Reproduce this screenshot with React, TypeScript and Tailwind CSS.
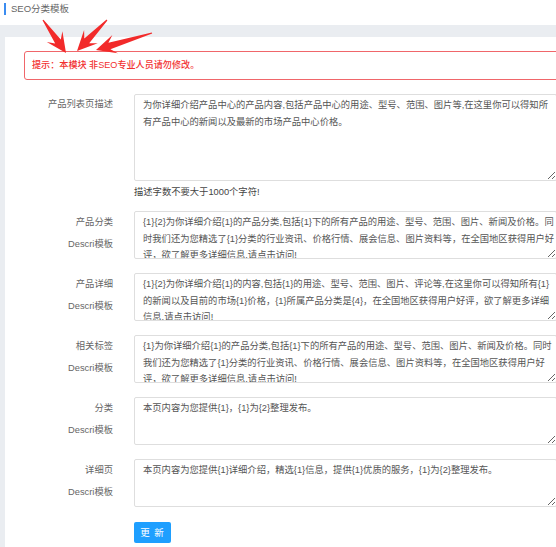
import React from "react";

const FONT = { fontFamily: '"Liberation Sans", Arial, "Noto Sans CJK SC", sans-serif' };

function arrowPoints(tx: number, ty: number, hx: number, hy: number) {
  const dx = hx - tx;
  const dy = hy - ty;
  const len = Math.sqrt(dx * dx + dy * dy);
  const ux = dx / len;
  const uy = dy / len;
  const px = -uy;
  const py = ux;
  const headLen = 20;
  const headW = 9.5;
  const neckW = 3.4;
  const tailW = 0.6;
  const bx = hx - ux * headLen;
  const by = hy - uy * headLen;
  const nx = hx - ux * (headLen - 6);
  const ny = hy - uy * (headLen - 6);
  const pts = [
    [tx + px * tailW, ty + py * tailW],
    [nx + px * neckW, ny + py * neckW],
    [bx + px * headW, by + py * headW],
    [hx, hy],
    [bx - px * headW, by - py * headW],
    [nx - px * neckW, ny - py * neckW],
    [tx - px * tailW, ty - py * tailW],
  ];
  return pts.map((p) => `${p[0].toFixed(1)},${p[1].toFixed(1)}`).join(" ");
}

const rows = [
  {
    label: "产品分类",
    text: "{1}{2}为你详细介绍{1}的产品分类,包括{1}下的所有产品的用途、型号、范围、图片、新闻及价格。同时我们还为您精选了{1}分类的行业资讯、价格行情、展会信息、图片资料等，在全国地区获得用户好评，欲了解更多详细信息,请点击访问!",
  },
  {
    label: "产品详细",
    text: "{1}{2}为你详细介绍{1}的内容,包括{1}的用途、型号、范围、图片、评论等,在这里你可以得知所有{1}的新闻以及目前的市场{1}价格，{1}所属产品分类是{4}，在全国地区获得用户好评，欲了解更多详细信息,请点击访问!",
  },
  {
    label: "相关标签",
    text: "{1}为你详细介绍{1}的产品分类,包括{1}下的所有产品的用途、型号、范围、图片、新闻及价格。同时我们还为您精选了{1}分类的行业资讯、价格行情、展会信息、图片资料等，在全国地区获得用户好评，欲了解更多详细信息,请点击访问!",
  },
  { label: "分类", text: "本页内容为您提供{1}，{1}为{2}整理发布。" },
  { label: "详细页", text: "本页内容为您提供{1}详细介绍，精选{1}信息，提供{1}优质的服务，{1}为{2}整理发布。" },
];

function Area({ text, h }: { text: string; h: string }) {
  return (
    <textarea
      readOnly
      defaultValue={text}
      className={`${h} block w-[423px] shrink-0 resize-y overflow-hidden rounded-[2px] border border-[#dedede] bg-white pl-[8px] pr-[1px] pt-[2px] text-[9.3px] leading-[16.5px] text-[#555] outline-none`}
      style={FONT}
    />
  );
}

export default function App() {
  return (
    <div className="relative h-[547px] w-[556px] overflow-hidden bg-white" style={FONT}>
      <div className="flex h-[25px] items-start pl-[4px] pt-[2px]">
        <div className="mt-[1px] h-[12px] w-[2px] bg-[#3b8cf0]" />
        <span className="ml-[5px] text-[9.5px] leading-[14px] text-[#666]">SEO分类模板</span>
      </div>
      <div className="bg-[#eaedf1] pl-[5px] pt-[12px]">
        <div className="h-[600px] bg-white pl-[19px] pt-[14px]">
          <div className="flex h-[29px] w-[560px] items-center rounded-[3px] border border-[#f0666a] pl-[7px] text-[9.1px] font-medium text-[#f22f2f]">
            提示：本模块 非SEO专业人员请勿修改。
          </div>

          <div className="mt-[14px] flex">
            <div className="w-[89px] shrink-0 pt-[2px] text-right text-[9.3px] leading-[17px] text-[#666]">产品列表页描述</div>
            <div className="ml-[21px] flex flex-col">
              <Area
                h="h-[87px]"
                text="为你详细介绍产品中心的产品内容,包括产品中心的用途、型号、范围、图片等,在这里你可以得知所有产品中心的新闻以及最新的市场产品中心价格。"
              />
              <div className="mt-[3px] text-[9.3px] leading-[17px] text-[#444]">描述字数不要大于1000个字符!</div>
            </div>
          </div>

          <div className="mt-[10px] flex flex-col gap-[14px]">
            {rows.map((r) => (
              <div key={r.label} className="flex">
                <div className="flex w-[89px] shrink-0 flex-col items-end pt-[3px] text-[9.3px] leading-[17px] text-[#666]">
                  <span>{r.label}</span>
                  <span className="mt-[5px]">Descri模板</span>
                </div>
                <div className="ml-[21px]">
                  <Area h="h-[48px]" text={r.text} />
                </div>
              </div>
            ))}
          </div>

          <div className="ml-[110px] mt-[15px]">
            <button className="block h-[21px] w-[37px] rounded-[2px] bg-[#1e9fff] text-[9.5px] leading-[21px] tracking-[1px] text-white">
              更 新
            </button>
          </div>
        </div>
      </div>

      <svg className="pointer-events-none absolute left-0 top-0" width="556" height="100" viewBox="0 0 556 100">
        <polygon points={arrowPoints(43, 20, 66, 53)} fill="#f22a2a" />
        <polygon points={arrowPoints(107, 20, 77, 51)} fill="#f22a2a" />
        <polygon points={arrowPoints(152, 33, 96, 50)} fill="#f22a2a" />
      </svg>
    </div>
  );
}
